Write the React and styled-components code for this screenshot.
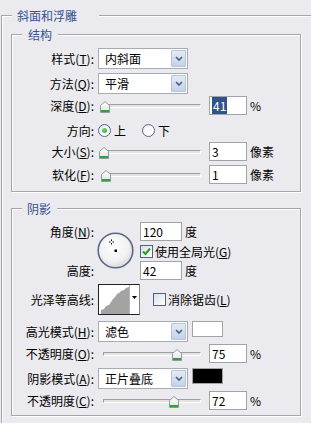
import React from 'react';
import styled, { createGlobalStyle } from 'styled-components';

const BG = '#ebeaee';
const ETCH = '#a5a4a8';

const Global = createGlobalStyle`
  html, body { margin: 0; padding: 0; background: ${BG}; overflow: hidden; }
  body {
    font-family: "Noto Sans CJK SC", "Noto Sans", sans-serif;
    font-size: 12px;
    color: #000;
  }
`;

const Page = styled.div`
  width: 311px;
  height: 423px;
  overflow: hidden;
  padding-top: 8px;
  box-sizing: border-box;
  background: ${BG};
`;

const Outer = styled.fieldset`
  margin: 0 0 0 1px;
  padding: 0 0 40px 0;
  width: 340px;
  min-width: 0;
  box-sizing: border-box;
  border: 1px solid ${ETCH};
  box-shadow: inset 1px 1px 0 #fff;
`;

const Group = styled.fieldset`
  margin: ${(p) => p.$mt}px 0 0 9px;
  padding: 6px 0 ${(p) => p.$pb}px 0;
  width: 290px;
  min-width: 0;
  box-sizing: border-box;
  border: 1px solid ${ETCH};
  box-shadow: inset 1px 1px 0 #fff, 1px 1px 0 #fff;
`;

const Legend = styled.legend`
  margin-left: 10px;
  padding: 0 ${(p) => p.$pr}px 0 ${(p) => p.$pl}px;
  height: 15px;
  line-height: 15px;
  color: #34538f;
  background: ${BG};
  font-size: 12px;
  white-space: nowrap;
`;

const Row = styled.div`
  display: flex;
  align-items: center;
  height: ${(p) => p.$h}px;
  margin-top: ${(p) => p.$mt || 0}px;
`;

const Label = styled.div`
  width: 84px;
  flex-shrink: 0;
  box-sizing: border-box;
  padding-right: 2px;
  margin-right: 2px;
  text-align: right;
  white-space: nowrap;
  line-height: 15px;
  grid-column: ${(p) => (p.$row ? 1 : 'auto')};
  grid-row: ${(p) => p.$row || 'auto'};
  align-self: center;
`;

const Select = styled.div`
  width: 90px;
  height: 21px;
  box-sizing: border-box;
  border: 1px solid #a5acb2;
  background: #fff;
  display: flex;
  flex-shrink: 0;
  align-self: ${(p) => (p.$top ? 'flex-start' : 'center')};
`;

const SelectText = styled.span`
  flex: 1;
  padding-left: 6px;
  line-height: 19px;
  white-space: nowrap;
`;

const SelectButton = styled.span`
  width: 15px;
  margin: 1px;
  box-sizing: border-box;
  border: 1px solid #b9c4d8;
  border-radius: 1px;
  background: linear-gradient(#e4ebf6, #c4d2e8);
  display: flex;
  align-items: center;
  justify-content: center;
`;

const Chevron = () => (
  <svg width="8" height="5" viewBox="0 0 8 5">
    <path d="M1 1 L4 4 L7 1" fill="none" stroke="#4d5f82" strokeWidth="1.7" />
  </svg>
);

const Combo = ({ value, top }) => (
  <Select $top={top}>
    <SelectText>{value}</SelectText>
    <SelectButton>
      <Chevron />
    </SelectButton>
  </Select>
);

const Field = styled.div`
  width: ${(p) => p.$w || 38}px;
  height: 19px;
  box-sizing: border-box;
  border: 1px solid #a0a3a8;
  background: #fff;
  padding-left: 2px;
  line-height: 17px;
  flex-shrink: 0;
  white-space: nowrap;
`;

const Selected = styled.span`
  background: #31528f;
  color: #fff;
  padding: 0 1px;
`;

const Unit = styled.span`
  margin-left: 3px;
  white-space: nowrap;
`;

const SliderBox = styled.div`
  position: relative;
  width: 107px;
  height: 19px;
  margin-right: 4px;
  padding: 0 4px 0 5px;
  box-sizing: border-box;
  display: flex;
  align-items: center;
  flex-shrink: 0;
`;

const Track = styled.div`
  flex: 1;
  height: 4px;
  box-sizing: border-box;
  border-top: 1px solid #9e9ea3;
  border-left: 1px solid #9e9ea3;
  border-bottom: 1px solid #fff;
  border-right: 1px solid #fff;
  background: #e4e3e0;
`;

const ThumbWrap = styled.span`
  position: absolute;
  top: 3px;
  width: 10px;
  height: 12px;
  display: block;
`;

const Thumb = () => (
  <svg width="10" height="12" viewBox="0 0 10 12">
    <defs>
      <linearGradient id="tg" x1="0" y1="0" x2="0" y2="1">
        <stop offset="0" stopColor="#ffffff" />
        <stop offset="1" stopColor="#e2e2e6" />
      </linearGradient>
    </defs>
    <path d="M0.5 4.5 L5 0.5 L9.5 4.5 V11.5 H0.5 Z" fill="url(#tg)" stroke="#8b98a8" />
    <rect x="1" y="9" width="8" height="2" fill="#2ea42e" />
  </svg>
);

const Slider = ({ pos }) => (
  <SliderBox>
    <Track />
    <ThumbWrap style={{ left: pos }}>
      <Thumb />
    </ThumbWrap>
  </SliderBox>
);

const RadioCircle = styled.span`
  width: 13px;
  height: 13px;
  box-sizing: border-box;
  border-radius: 50%;
  border: 1px solid #55688d;
  background: radial-gradient(circle at 65% 65%, #ffffff 40%, #dcdde4 100%);
  display: grid;
  place-items: center;
  flex-shrink: 0;
  margin-left: ${(p) => p.$ml || 0}px;
`;

const RadioDot = styled.span`
  width: 5px;
  height: 5px;
  border-radius: 50%;
  background: radial-gradient(circle at 40% 40%, #7fdc7f, #1f9a1f);
`;

const OptText = styled.span`
  margin-left: ${(p) => p.$ml || 3}px;
  white-space: nowrap;
`;

const CheckBoxEl = styled.span`
  width: 13px;
  height: 13px;
  box-sizing: border-box;
  border: 1px solid #4d6189;
  background: linear-gradient(135deg, #dcdde3, #ffffff);
  display: grid;
  place-items: center;
  flex-shrink: 0;
  margin-left: ${(p) => p.$ml || 0}px;
`;

const CheckBox = ({ checked, ml }) => (
  <CheckBoxEl $ml={ml}>
    {checked && (
      <svg width="9" height="9" viewBox="0 0 9 9">
        <path d="M1 4.5 L3.5 7 L8 1.5" fill="none" stroke="#21a121" strokeWidth="2" />
      </svg>
    )}
  </CheckBoxEl>
);

const Swatch = styled.div`
  width: 31px;
  height: 16px;
  box-sizing: border-box;
  border: 1px solid #a3a3a6;
  background: ${(p) => p.$color};
  margin-left: 4px;
  align-self: flex-start;
`;

const AngleGrid = styled.div`
  display: grid;
  grid-template-columns: 86px 42px 1fr;
  grid-template-rows: 19px 20px 19px;
`;

const DialCell = styled.div`
  grid-column: 2;
  grid-row: 1 / 4;
  align-self: start;
  margin-top: 10px;
  margin-left: -1px;
  width: 38px;
  height: 38px;
`;

const Cell = styled.div`
  grid-column: 3;
  grid-row: ${(p) => p.$row};
  display: flex;
  align-items: center;
`;

const Dial = () => (
  <svg width="38" height="38" viewBox="0 0 38 38">
    <defs>
      <radialGradient id="dg" cx="0.45" cy="0.4" r="0.6">
        <stop offset="0" stopColor="#ffffff" />
        <stop offset="0.7" stopColor="#f1f1f3" />
        <stop offset="1" stopColor="#d9d9de" />
      </radialGradient>
    </defs>
    <circle cx="18.5" cy="18.5" r="17.3" fill="url(#dg)" stroke="#5b6985" strokeWidth="1.6" />
    <path d="M14.5 7.5 V9 M14.5 11 V12.5 M12 10 H13.5 M15.5 10 H17" stroke="#000" strokeWidth="1" />
    <rect x="17.5" y="17.5" width="2.5" height="2.5" fill="#000" />
  </svg>
);

const ContourBox = styled.div`
  width: 42px;
  height: 31px;
  box-sizing: border-box;
  border: 1px solid #222;
  border-right-color: #888;
  background: #fff;
  display: flex;
  flex-shrink: 0;
`;

const ContourPreview = styled.div`
  width: 30px;
  height: 29px;
  border-right: 1px solid #b5b5b5;
`;

const ContourArrow = styled.div`
  flex: 1;
  display: flex;
  justify-content: center;
  padding-top: 11px;
`;

const Contour = () => (
  <ContourBox>
    <ContourPreview>
      <svg width="30" height="29" viewBox="0 0 30 29">
        <polygon
          points="2,29 2,25 5,24 7,21 10,20 12,17 14,14 16,12 18,9 20,8 22,6 25,5 27,3 30,2 30,29"
          fill="#a3a3a3"
        />
      </svg>
    </ContourPreview>
    <ContourArrow>
      <svg width="5" height="3" viewBox="0 0 5 3">
        <path d="M0 0 H5 L2.5 3 Z" fill="#000" />
      </svg>
    </ContourArrow>
  </ContourBox>
);

export default function App() {
  return (
    <>
      <Global />
      <Page>
        <Outer>
          <Legend $pl={5} $pr={22}>斜面和浮雕</Legend>

          <Group $mt={4} $pb={7}>
            <Legend $pl={6} $pr={6}>结构</Legend>
            <Row $h={21}>
              <Label>样式(<u>T</u>):</Label>
              <Combo value="内斜面" />
            </Row>
            <Row $h={21} $mt={4}>
              <Label>方法(<u>Q</u>):</Label>
              <Combo value="平滑" />
            </Row>
            <Row $h={19} $mt={2}>
              <Label>深度(<u>D</u>):</Label>
              <Slider pos={2} />
              <Field><Selected>41</Selected></Field>
              <Unit>%</Unit>
            </Row>
            <Row $h={18} $mt={6}>
              <Label>方向:</Label>
              <RadioCircle><RadioDot /></RadioCircle>
              <OptText>上</OptText>
              <RadioCircle $ml={16} />
              <OptText>下</OptText>
            </Row>
            <Row $h={19} $mt={3}>
              <Label>大小(<u>S</u>):</Label>
              <Slider pos={1} />
              <Field>3</Field>
              <Unit>像素</Unit>
            </Row>
            <Row $h={19} $mt={4}>
              <Label>软化(<u>F</u>):</Label>
              <Slider pos={3} />
              <Field>1</Field>
              <Unit>像素</Unit>
            </Row>
          </Group>

          <Group $mt={9} $pb={5}>
            <Legend $pl={5} $pr={6}>阴影</Legend>
            <AngleGrid>
              <Label $row={1}>角度(<u>N</u>):</Label>
              <DialCell><Dial /></DialCell>
              <Cell $row={1}>
                <Field $w={42}>120</Field>
                <Unit>度</Unit>
              </Cell>
              <Cell $row={2}>
                <CheckBox checked />
                <OptText $ml={2}>使用全局光(<u>G</u>)</OptText>
              </Cell>
              <Label $row={3}>高度:</Label>
              <Cell $row={3}>
                <Field $w={42}>42</Field>
                <Unit>度</Unit>
              </Cell>
            </AngleGrid>
            <Row $h={31} $mt={4}>
              <Label>光泽等高线:</Label>
              <Contour />
              <CheckBox ml={13} />
              <OptText $ml={2}>消除锯齿(<u>L</u>)</OptText>
            </Row>
            <Row $h={21} $mt={6}>
              <Label>高光模式(<u>H</u>):</Label>
              <Combo value="滤色" />
              <Swatch $color="#ffffff" />
            </Row>
            <Row $h={19} $mt={2}>
              <Label>不透明度(<u>O</u>):</Label>
              <Slider pos={74} />
              <Field>75</Field>
              <Unit>%</Unit>
            </Row>
            <Row $h={21} $mt={5}>
              <Label>阴影模式(<u>A</u>):</Label>
              <Combo value="正片叠底" />
              <Swatch $color="#000000" />
            </Row>
            <Row $h={19} $mt={2}>
              <Label>不透明度(<u>C</u>):</Label>
              <Slider pos={71} />
              <Field>72</Field>
              <Unit>%</Unit>
            </Row>
          </Group>
        </Outer>
      </Page>
    </>
  );
}
